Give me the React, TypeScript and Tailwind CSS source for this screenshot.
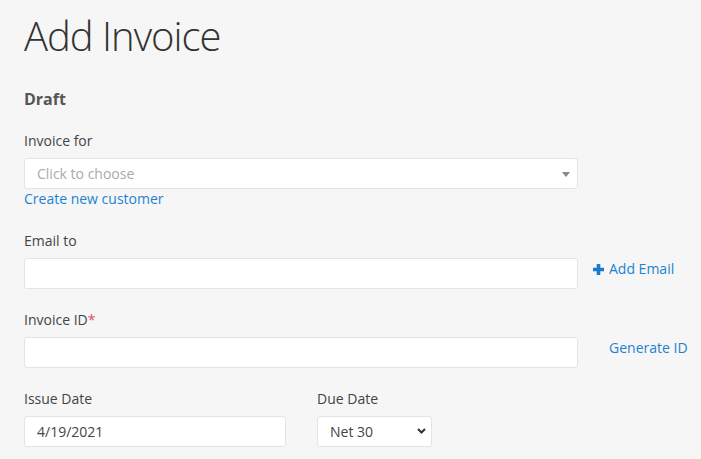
import { useState } from 'react';

function Label({ children }: { children: React.ReactNode }) {
  return <div className="mb-[7px] text-sm leading-5 text-[#444]">{children}</div>;
}

export default function App() {
  const [issueDate, setIssueDate] = useState('4/19/2021');
  const [due, setDue] = useState('Net 30');

  return (
    <div className="min-h-screen bg-[#f6f6f6] pl-6 pt-3 font-['Open_Sans',sans-serif]">
      <h1 className="text-[40px] font-light leading-[48px] tracking-[-1px] text-[#333]">Add Invoice</h1>
      <h2 className="mt-[27px] text-base font-bold leading-6 text-[#555]">Draft</h2>

      {/* invoice for */}
      <div className="mt-5 w-[554px]">
        <Label>Invoice for</Label>
        <div className="relative flex h-[31px] items-center rounded-[3px] border border-[#e4e4e4] bg-white pl-3 text-sm text-[#aaa]">
          Click to choose
          <svg className="absolute right-[7px] top-[13px]" width="8" height="5" viewBox="0 0 8 5">
            <path d="M0 0h8L4 5z" fill="#888" />
          </svg>
        </div>
        <a href="#" className="block text-sm leading-5 text-[#1c82d0]">
          Create new customer
        </a>
      </div>

      {/* email */}
      <div className="mt-[22px]">
        <Label>Email to</Label>
        <div className="flex items-start">
          <input className="h-[31px] w-[554px] rounded-[3px] border border-[#e4e4e4] bg-white px-3 text-sm outline-none" />
          <a href="#" className="ml-[15px] mt-[1px] flex items-center text-sm leading-5 text-[#1c82d0]">
            <svg width="11" height="11" viewBox="0 0 11 11" className="mr-[5px]">
              <path d="M3.7 0h3.6v3.7H11v3.6H7.3V11H3.7V7.3H0V3.7h3.7z" fill="#1a7ccc" />
            </svg>
            Add Email
          </a>
        </div>
      </div>

      {/* invoice id */}
      <div className="mt-[21px]">
        <Label>
          Invoice ID<span className="text-[#d9505c]">*</span>
        </Label>
        <div className="flex items-start">
          <input className="h-[31px] w-[554px] rounded-[3px] border border-[#e4e4e4] bg-white px-3 text-sm outline-none" />
          <a href="#" className="ml-[31px] mt-[1px] text-sm leading-5 text-[#1c82d0]">
            Generate ID
          </a>
        </div>
      </div>

      {/* dates */}
      <div className="mt-[21px] flex gap-[31px]">
        <div>
          <Label>Issue Date</Label>
          <input
            value={issueDate}
            onChange={(e) => setIssueDate(e.target.value)}
            className="h-[31px] w-[262px] rounded-[3px] border border-[#e4e4e4] bg-white px-3 text-sm text-[#444] outline-none"
          />
        </div>
        <div>
          <Label>Due Date</Label>
          <div className="relative w-[115px]">
            <select
              value={due}
              onChange={(e) => setDue(e.target.value)}
              className="h-[31px] w-full appearance-none rounded-[3px] border border-[#e4e4e4] bg-white pl-3 text-sm text-[#444] outline-none"
            >
              <option>Net 15</option>
              <option>Net 30</option>
              <option>Net 60</option>
            </select>
            <svg className="pointer-events-none absolute right-[6px] top-[12px]" width="9" height="6" viewBox="0 0 9 6">
              <path d="M1 1l3.5 3.5L8 1" stroke="#333" strokeWidth="2" fill="none" />
            </svg>
          </div>
        </div>
      </div>
    </div>
  );
}
